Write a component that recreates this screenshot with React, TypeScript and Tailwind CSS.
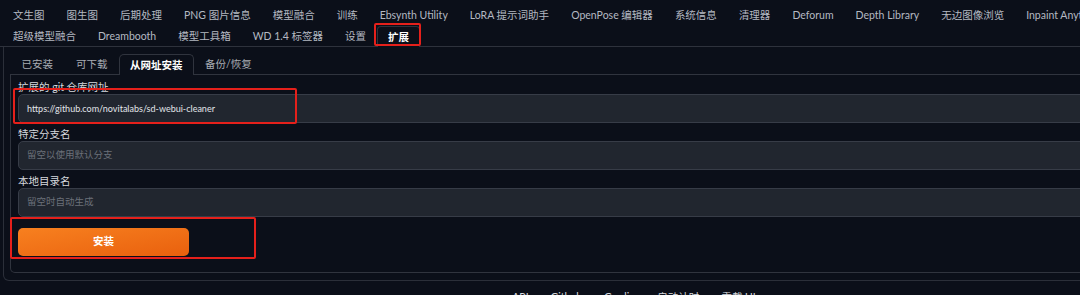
import React from "react";

const topRow1 = [
    "文生图",
    "图生图",
    "后期处理",
    "PNG 图片信息",
    "模型融合",
    "训练",
    "Ebsynth Utility",
    "LoRA 提示词助手",
    "OpenPose 编辑器",
    "系统信息",
    "清理器",
    "Deforum",
    "Depth Library",
    "无边图像浏览",
    "Inpaint Anything",
];

const topRow2 = ["超级模型融合", "Dreambooth", "模型工具箱", "WD 1.4 标签器", "设置"];

const subTabs = ["已安装", "可下载", "从网址安装", "备份/恢复"];

interface FieldProps {
    label: string;
    value?: string;
    placeholder?: string;
}

const Field = ({ label, value, placeholder }: FieldProps) => (
    <div className="flex flex-col">
        <span className="text-[10.5px] leading-[13px] text-[#d6d9de]">{label}</span>
        <div className="h-[29px] rounded-[5px] border border-[#373c47] bg-[#21262f] px-[8px] flex items-center">
            {value ? (
                <span className="text-[9px] text-[#e2e5ea]">{value}</span>
            ) : (
                <span className="text-[9.5px] text-[#6b7079]">{placeholder}</span>
            )}
        </div>
    </div>
);

const App = () => {
    return (
        <div className="w-full h-[295px] overflow-hidden bg-[#0b0f19] font-['Lato','Noto_Sans_CJK_SC',sans-serif]">
            <div className="relative w-[1260px]">
                {/* top tabs */}
                <div className="flex flex-col border-b border-[#2e323c] pt-[5px]">
                    <div className="flex h-[21px] items-center pl-[2px]">
                        {topRow1.map((t) => (
                            <span key={t} className="px-[11px] text-[10.5px] text-[#b4b9c2] whitespace-nowrap">
                                {t}
                            </span>
                        ))}
                    </div>
                    <div className="flex h-[20px] items-end pl-[2px]">
                        {topRow2.map((t) => (
                            <span key={t} className="px-[11px] h-[20px] leading-[20px] text-[10.5px] text-[#b4b9c2] whitespace-nowrap">
                                {t}
                            </span>
                        ))}
                        <span className="px-[10px] h-[21px] leading-[20px] -mb-px rounded-t-[4px] border border-b-0 border-[#2e323c] bg-[#0b0f19] text-[10.5px] font-bold text-white">
                            扩展
                        </span>
                    </div>
                </div>

                {/* outer panel */}
                <div className="ml-[3px] border border-t-0 border-[#2b2f39] rounded-b-[6px] px-[6px] pt-[7px] pb-[7px]">
                    <div className="flex h-[21px] border-b border-[#30343e]">
                        {subTabs.map((t, i) =>
                            i === 2 ? (
                                <span
                                    key={t}
                                    className="px-[10px] leading-[20px] -mb-px rounded-t-[5px] border border-b-0 border-[#30343e] bg-[#0b0f19] text-[10.5px] font-bold text-white"
                                >
                                    {t}
                                </span>
                            ) : (
                                <span key={t} className="px-[11.5px] leading-[20px] text-[10.5px] text-[#a8acb3]">
                                    {t}
                                </span>
                            )
                        )}
                    </div>
                    <div className="border border-t-0 border-[#30343e] rounded-b-[5px] px-[7px] pt-[6px] pb-[16px] flex flex-col gap-[5px]">
                        <Field label="扩展的 git 仓库网址" value="https://github.com/novitalabs/sd-webui-cleaner" />
                        <Field label="特定分支名" placeholder="留空以使用默认分支" />
                        <Field label="本地目录名" placeholder="留空时自动生成" />
                        <button className="mt-[6px] w-[171px] h-[28px] rounded-[5px] bg-linear-to-br from-[#f7801f] to-[#e9600d] text-[10.5px] font-bold text-white">
                            安装
                        </button>
                    </div>
                </div>

                {/* footer */}
                <div className="flex justify-center gap-[8px] pt-[9px] pl-[8px] text-[10.5px] text-[#d6d9de]">
                    <span>API</span>
                    <span>•</span>
                    <span>Github</span>
                    <span>•</span>
                    <span>Gradio</span>
                    <span>•</span>
                    <span>启动计时</span>
                    <span>•</span>
                    <span>重载 UI</span>
                </div>

                {/* red highlight boxes */}
                <div className="absolute left-[374px] top-[23px] w-[47px] h-[23px] border-2 border-[#e5201b] rounded-[2px]" />
                <div className="absolute left-[13px] top-[88px] w-[284px] h-[36px] border-2 border-[#e5201b] rounded-[2px]" />
                <div className="absolute left-[10px] top-[217px] w-[246px] h-[42px] border-2 border-[#e5201b] rounded-[2px]" />
            </div>
        </div>
    );
};

export default App;
